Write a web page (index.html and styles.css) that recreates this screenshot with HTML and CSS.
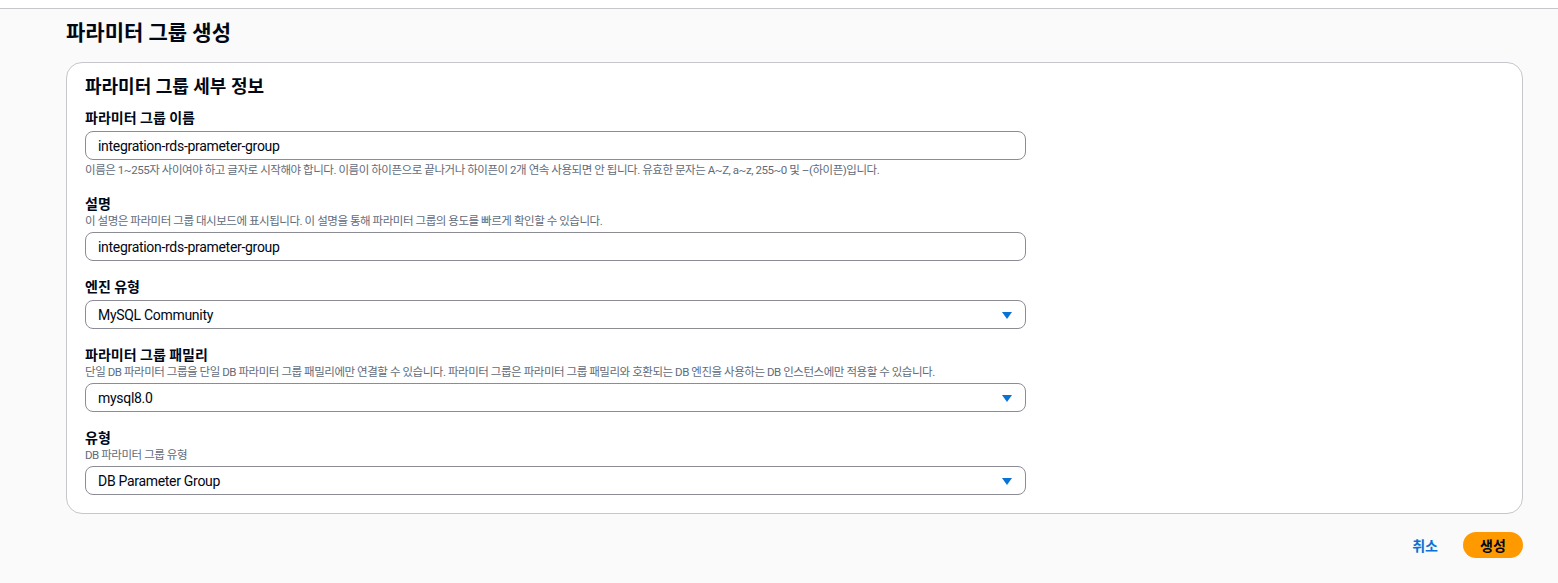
FILE: index.html
```html
<!DOCTYPE html>
<html lang="ko">
<head>
<meta charset="utf-8">
<link rel="stylesheet" href="styles.css">
</head>
<body>
<div class="topbar"></div>
<main class="page">
  <h1 class="page-title">파라미터 그룹 생성</h1>
  <section class="card">
    <h2 class="card-title">파라미터 그룹 세부 정보</h2>
    <div class="fields">
      <div class="field">
        <label class="label">파라미터 그룹 이름</label>
        <div class="control input">integration-rds-prameter-group</div>
        <p class="help constraint">이름은 1~255자 사이여야 하고 글자로 시작해야 합니다. 이름이 하이픈으로 끝나거나 하이픈이 2개 연속 사용되면 안 됩니다. 유효한 문자는 A~Z, a~z, 255~0 및 –(하이픈)입니다.</p>
      </div>
      <div class="field">
        <label class="label">설명</label>
        <p class="help">이 설명은 파라미터 그룹 대시보드에 표시됩니다. 이 설명을 통해 파라미터 그룹의 용도를 빠르게 확인할 수 있습니다.</p>
        <div class="control input">integration-rds-prameter-group</div>
      </div>
      <div class="field">
        <label class="label">엔진 유형</label>
        <div class="control select"><span>MySQL Community</span><svg class="caret" width="12" height="10" viewBox="0 0 12 10"><path d="M1 2h10L6 9z" fill="#0972d3"/></svg></div>
      </div>
      <div class="field">
        <label class="label">파라미터 그룹 패밀리</label>
        <p class="help">단일 DB 파라미터 그룹을 단일 DB 파라미터 그룹 패밀리에만 연결할 수 있습니다. 파라미터 그룹은 파라미터 그룹 패밀리와 호환되는 DB 엔진을 사용하는 DB 인스턴스에만 적용할 수 있습니다.</p>
        <div class="control select"><span>mysql8.0</span><svg class="caret" width="12" height="10" viewBox="0 0 12 10"><path d="M1 2h10L6 9z" fill="#0972d3"/></svg></div>
      </div>
      <div class="field">
        <label class="label">유형</label>
        <p class="help">DB 파라미터 그룹 유형</p>
        <div class="control select"><span>DB Parameter Group</span><svg class="caret" width="12" height="10" viewBox="0 0 12 10"><path d="M1 2h10L6 9z" fill="#0972d3"/></svg></div>
      </div>
    </div>
  </section>
  <div class="actions">
    <button class="btn-link">취소</button>
    <button class="btn-primary">생성</button>
  </div>
</main>
</body>
</html>
```
FILE: styles.css
```css
* { box-sizing: border-box; }
html, body { margin: 0; padding: 0; }
body {
  background: #fafafa;
  font-family: Roboto, "Noto Sans CJK KR", sans-serif;
  color: #000716;
  font-size: 14px;
}
.topbar {
  height: 9px;
  background: #fff;
  border-bottom: 1px solid #c6c6cd;
}
.page {
  padding: 0 35px 0 66px;
}
.page-title {
  margin: 0;
  padding-top: 10px;
  font-size: 21px;
  line-height: 28px;
  font-weight: 700;
  height: 53px;
}
.card {
  background: #fff;
  border: 1px solid #c6c6cd;
  border-radius: 16px;
  padding: 12px 19px 18px 18px;
}
.card-title {
  margin: 0;
  font-size: 18px;
  line-height: 24px;
  font-weight: 700;
  margin-bottom: 10px;
}
.fields {
  display: flex;
  flex-direction: column;
  gap: 17px;
}
.field {
  display: flex;
  flex-direction: column;
  width: 941px;
}
.label {
  font-size: 14px;
  font-weight: 700;
  line-height: 18px;
}
.help {
  margin: 0 0 3px 0;
  font-size: 11.5px;
  line-height: 16px;
  color: #5f6b7a;
  letter-spacing: -0.45px;
  white-space: nowrap;
}
.help.constraint {
  margin: 2px 0 0 0;
}
.control {
  margin-top: 4px;
  height: 29px;
  border: 1px solid #8c8c94;
  border-radius: 8px;
  padding: 0 12px;
  display: flex;
  align-items: center;
  font-size: 14px;
  letter-spacing: -0.3px;
}
.help + .control { margin-top: 0; }
.select { justify-content: space-between; padding-right: 12px; }
.caret { display: block; }
.actions {
  display: flex;
  justify-content: flex-end;
  align-items: center;
  gap: 25px;
  padding-top: 18px;
}
.btn-link {
  background: none;
  border: 0;
  padding: 0;
  font-family: inherit;
  font-size: 14px;
  font-weight: 700;
  color: #0972d3;
}
.btn-primary {
  background: #ff9900;
  border: 0;
  border-radius: 20px;
  height: 26px;
  width: 60px;
  font-family: inherit;
  font-size: 14px;
  font-weight: 700;
  color: #000716;
}
```
